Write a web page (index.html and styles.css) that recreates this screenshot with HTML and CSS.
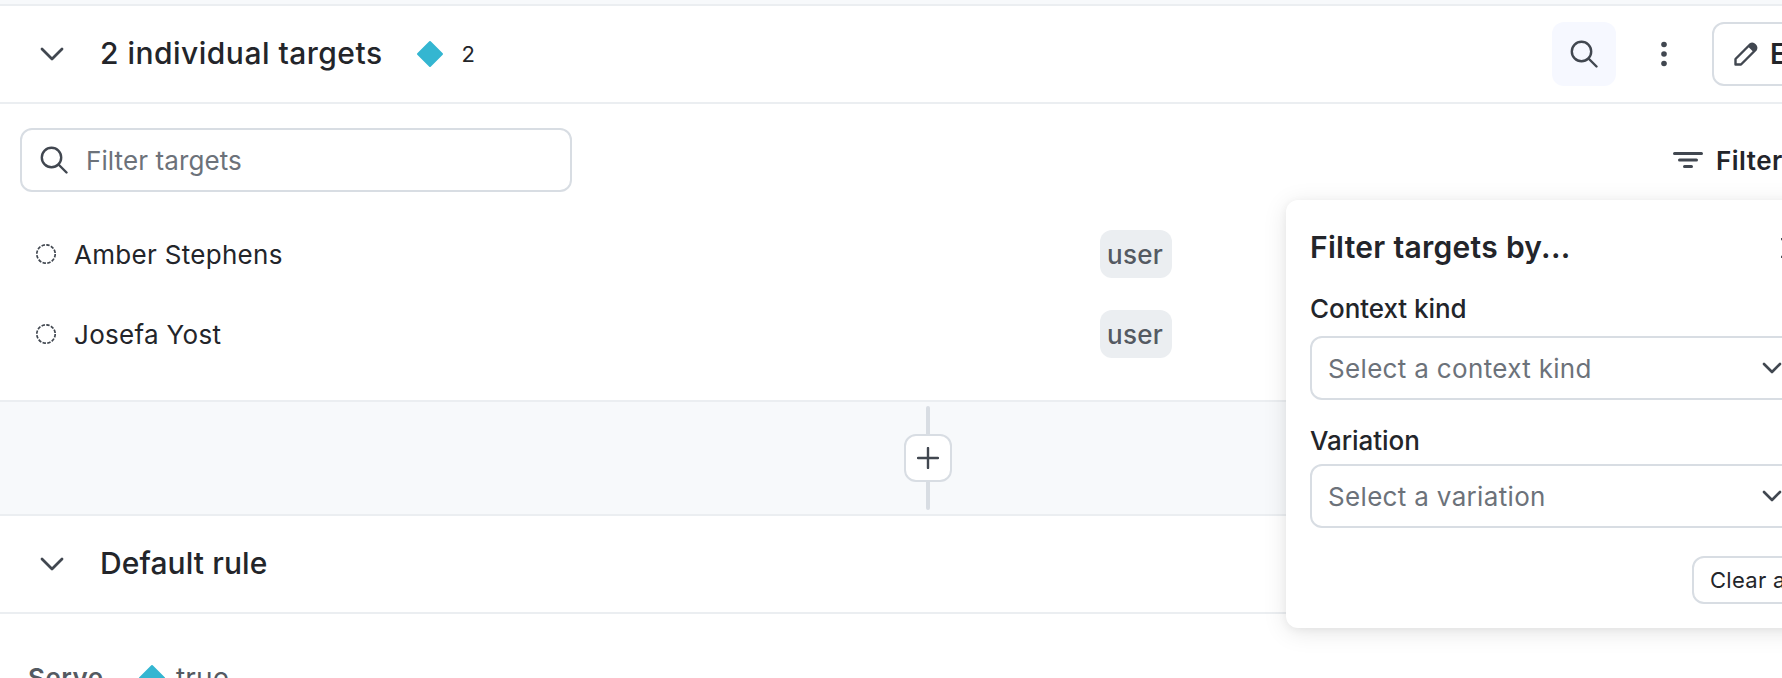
FILE: index.html
```html
<!DOCTYPE html>
<html lang="en">
<head>
    <meta charset="UTF-8">
    <meta name="viewport" content="width=device-width, initial-scale=1.0">
    <title>Targeting</title>
    <link rel="stylesheet" href="styles.css">
</head>
<body>
    <section class="card targets">
        <header class="card-header">
            <svg class="chevron" width="24" height="16" viewBox="0 0 24 16"><path d="M2 3l10 10L22 3"/></svg>
            <h2 class="title">2 individual targets</h2>
            <svg class="diamond" width="28" height="28" viewBox="0 0 28 28"><path d="M14 2L26 14 14 26 2 14z"/></svg>
            <span class="count">2</span>
            <div class="actions">
                <button class="icon-btn active">
                    <svg class="line" width="28" height="28" viewBox="0 0 28 28"><circle cx="11.500" cy="11.500" r="9.700"/><path d="M18.500 18.500l8 8"/></svg>
                </button>
                <button class="icon-btn">
                    <svg class="dots" width="8" height="26" viewBox="0 0 8 26"><circle cx="4" cy="3.500" r="2.800"/><circle cx="4" cy="13" r="2.800"/><circle cx="4" cy="22.500" r="2.800"/></svg>
                </button>
                <button class="edit-btn">
                    <svg class="pencil" width="26" height="26" viewBox="0 0 26 26"><path class="stroke" d="M2.500 18L17 3.500a4 4 0 0 1 5.500 5.500L8 23.500H2.500z"/><path class="fill" d="M15 5.500l2-2a4 4 0 0 1 5.500 5.500l-2 2z"/></svg>
                    <span>Edit</span>
                </button>
            </div>
        </header>
        <div class="toolbar">
            <label class="search">
                <svg class="line" width="28" height="30" viewBox="0 0 28 30"><circle cx="11.500" cy="12.500" r="9.700"/><path d="M18.500 19.500l8 8"/></svg>
                <input type="text" placeholder="Filter targets">
            </label>
            <div class="filter-btn">
                <svg class="filter-icon" width="30" height="20" viewBox="0 0 30 20"><path d="M1.500 3.500h27M6.500 10h17M11.500 16.500h7"/></svg>
                <span>Filter</span>
            </div>
        </div>
        <ul class="rows">
            <li class="row">
                <svg class="dashed" width="20" height="20" viewBox="0 0 20 20"><circle cx="10" cy="10" r="9.200"/></svg>
                <span class="name">Amber Stephens</span>
                <span class="kind">user</span>
            </li>
            <li class="row">
                <svg class="dashed" width="20" height="20" viewBox="0 0 20 20"><circle cx="10" cy="10" r="9.200"/></svg>
                <span class="name">Josefa Yost</span>
                <span class="kind">user</span>
            </li>
        </ul>
    </section>

    <div class="connector">
        <span class="stem top"></span>
        <button class="add-btn">
            <svg class="line" width="22" height="22" viewBox="0 0 22 22"><path d="M11 1v20M1 11h20"/></svg>
        </button>
        <span class="stem bottom"></span>
    </div>

    <section class="card">
        <header class="card-header">
            <svg class="chevron" width="24" height="16" viewBox="0 0 24 16"><path d="M2 3l10 10L22 3"/></svg>
            <h2 class="title rule">Default rule</h2>
        </header>
        <div class="serve">
            <span class="serve-label">Serve</span>
            <svg class="diamond" width="28" height="28" viewBox="0 0 28 28"><path d="M14 2L26 14 14 26 2 14z"/></svg>
            <span class="serve-value">true</span>
        </div>
    </section>

    <div class="popover">
        <div class="popover-head">
            <h3 class="popover-title">Filter targets by...</h3>
            <svg class="line" width="20" height="20" viewBox="0 0 20 20"><path d="M1 1l18 18M19 1L1 19"/></svg>
        </div>
        <div class="field">
            <span class="label">Context kind</span>
            <div class="select">
                <span>Select a context kind</span>
                <svg class="chevron small" width="20" height="14" viewBox="0 0 20 14"><path d="M2 3l8 8 8-8"/></svg>
            </div>
        </div>
        <div class="field variation">
            <span class="label">Variation</span>
            <div class="select">
                <span>Select a variation</span>
                <svg class="chevron small" width="20" height="14" viewBox="0 0 20 14"><path d="M2 3l8 8 8-8"/></svg>
            </div>
        </div>
        <button class="clear-btn">Clear all</button>
    </div>
</body>
</html>
```
FILE: styles.css
```css
* {
    box-sizing: border-box;
}

body {
    position: relative;
    height: 678px;
    margin: 0;
    padding-top: 4px;
    overflow: hidden;
    background-color: #f7f9fb;
    color: #23252a;
    font-family: Inter, sans-serif;
    font-size: 28px;
}

button, input {
    font-family: inherit;
    color: inherit;
    margin: 0;
}

svg {
    display: block;
    flex: none;
    fill: none;
}

.line, .chevron, .filter-icon {
    stroke: #414750;
    stroke-width: 2.4;
    stroke-linecap: round;
    stroke-linejoin: round;
}

.chevron {
    stroke-width: 2.8;
}

.chevron.small {
    stroke-width: 2.6;
}

.filter-icon {
    stroke-width: 3;
}

.diamond {
    fill: #34b6d1;
    stroke: #34b6d1;
    stroke-width: 2;
    stroke-linejoin: round;
}

.dots, .pencil .fill {
    fill: #414750;
}

.pencil .stroke {
    stroke: #414750;
    stroke-width: 2.4;
    stroke-linejoin: round;
}

.card {
    background-color: white;
    border-top: 2px solid #ebeef1;
}

.targets {
    height: 398px;
    border-bottom: 2px solid #ebeef1;
}

.card-header {
    display: flex;
    align-items: center;
    height: 98px;
    padding-left: 40px;
    border-bottom: 2px solid #ebeef1;
}

.title {
    margin: 0 0 2px 36px;
    font-size: 30px;
    line-height: 40px;
    font-weight: 500;
    letter-spacing: 0.48px;
    white-space: nowrap;
}

.title.rule {
    letter-spacing: 0.1px;
}

.card-header .diamond {
    margin-left: 33px;
}

.count {
    margin-left: 18px;
    font-size: 22px;
}

.actions {
    display: flex;
    gap: 16px;
    margin-left: auto;
    margin-right: -60px;
}

.icon-btn, .edit-btn {
    display: flex;
    align-items: center;
    justify-content: center;
    width: 64px;
    height: 64px;
    padding: 0;
    border: none;
    border-radius: 12px;
    background-color: white;
}

.icon-btn.active {
    background-color: #f6f8ff;
}

.edit-btn {
    width: 130px;
    padding-left: 19px;
    border: 2px solid #d8dde3;
    justify-content: flex-start;
    gap: 11px;
    font-size: 28px;
    font-weight: 600;
}

.toolbar {
    display: flex;
    justify-content: space-between;
    align-items: center;
    padding: 24px 0 0 20px;
    margin-right: -14px;
}

.search {
    display: flex;
    align-items: center;
    width: 552px;
    height: 64px;
    padding-left: 18px;
    border: 2px solid #d8dde3;
    border-radius: 12px;
}

.search input {
    width: 440px;
    margin-left: 18px;
    padding: 0;
    border: none;
    outline: none;
    background: none;
    font-size: 26px;
    letter-spacing: 0.1px;
}

.search input::placeholder {
    color: #6c727a;
    opacity: 1;
}

.filter-btn {
    display: flex;
    align-items: center;
    width: 123px;
    gap: 13px;
    font-size: 26px;
    font-weight: 600;
    letter-spacing: 0.5px;
}

.rows {
    margin: 0;
    padding: 22px 0 0 36px;
    list-style: none;
}

.row {
    display: grid;
    grid-template-columns: 38px 1026px auto;
    align-items: center;
    justify-content: start;
    height: 80px;
    font-size: 26px;
    letter-spacing: 0.3px;
}

.dashed {
    stroke: #414750;
    stroke-width: 1.7;
    stroke-dasharray: 3.4 1.417;
}

.kind {
    width: 72px;
    height: 48px;
    padding-left: 7px;
    border-radius: 12px;
    background-color: #ebeef1;
    color: #545a62;
    font-weight: 500;
    line-height: 49px;
    letter-spacing: 0.3px;
}

.connector {
    display: flex;
    flex-direction: column;
    align-items: center;
    width: 1856px;
    height: 112px;
    padding: 4px 0;
}

.stem {
    width: 4px;
    height: 28px;
    background-color: #d8dde3;
}

.stem.top {
    border-radius: 2px 2px 0 0;
}

.stem.bottom {
    border-radius: 0 0 2px 2px;
}

.add-btn {
    display: flex;
    align-items: center;
    justify-content: center;
    width: 48px;
    height: 48px;
    padding: 0;
    border: 2px solid #d8dde3;
    border-radius: 12px;
    background-color: white;
}

.serve {
    display: flex;
    align-items: center;
    padding: 44px 0 20px 28px;
    color: #545a62;
    font-size: 26px;
    line-height: 40px;
}

.serve-label {
    width: 110px;
    font-weight: 600;
    letter-spacing: 0.5px;
}

.serve-value {
    margin-left: 10px;
    font-size: 28px;
    letter-spacing: 0.2px;
}

/* opens over the page, under the Filter button */
.popover {
    position: absolute;
    top: 200px;
    left: 1286px;
    width: 560px;
    height: 428px;
    padding: 24px;
    border-radius: 12px;
    background-color: white;
    box-shadow: 0 4px 24px rgba(0, 0, 0, 0.1), 0 2px 8px rgba(0, 0, 0, 0.05);
}

.popover-head {
    display: flex;
    align-items: center;
    justify-content: space-between;
    width: 491px;
    height: 48px;
}

.popover-title {
    margin: 0 0 2px;
    font-size: 30px;
    line-height: 46px;
    font-weight: 600;
    letter-spacing: 0.3px;
}

.label {
    display: block;
    height: 40px;
    margin-top: 16px;
    font-weight: 500;
    font-size: 26px;
    line-height: 41px;
    letter-spacing: -0.05px;
}

.select {
    display: flex;
    align-items: center;
    justify-content: space-between;
    height: 64px;
    margin-top: 8px;
    padding: 0 38px 0 16px;
    border: 2px solid #d8dde3;
    border-radius: 12px;
    color: #6c727a;
    font-size: 26px;
    letter-spacing: 0.33px;
}

.variation .label {
    margin-top: 20px;
}

.variation .select {
    margin-top: 4px;
}

.clear-btn {
    display: block;
    width: 130px;
    height: 48px;
    margin: 28px 0 0 auto;
    padding: 0 0 0 16px;
    border: 2px solid #d8dde3;
    border-radius: 12px;
    background-color: white;
    font-size: 22px;
    letter-spacing: 0.3px;
    text-align: left;
}
```
